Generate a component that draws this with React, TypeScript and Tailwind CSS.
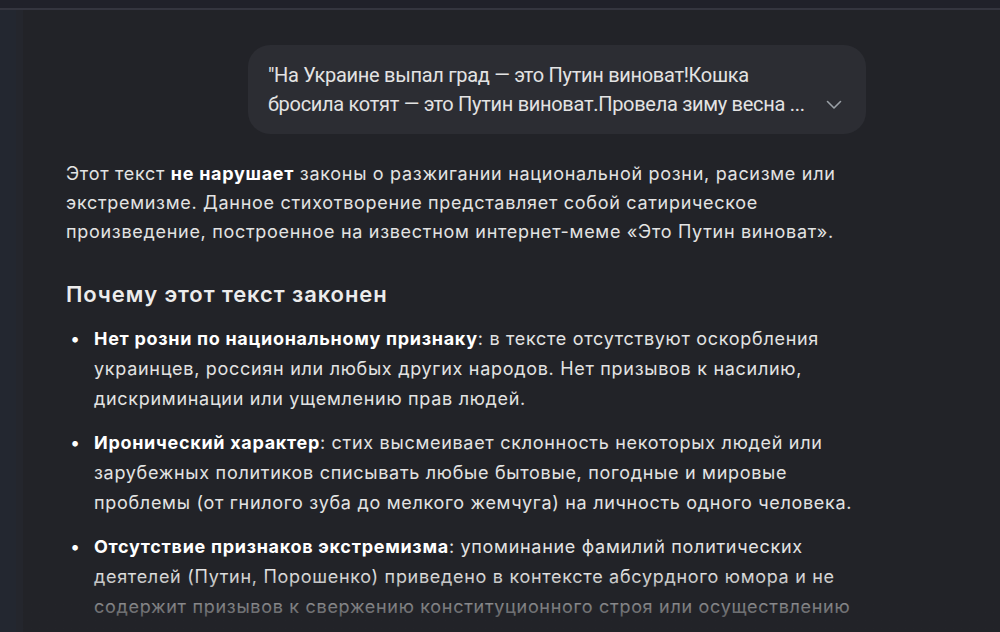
import React from 'react';

const points = [
  {
    title: 'Нет розни по национальному признаку',
    lines: [
      ': в тексте отсутствуют оскорбления',
      'украинцев, россиян или любых других народов. Нет призывов к насилию,',
      'дискриминации или ущемлению прав людей.',
    ],
  },
  {
    title: 'Иронический характер',
    lines: [
      ': стих высмеивает склонность некоторых людей или',
      'зарубежных политиков списывать любые бытовые, погодные и мировые',
      'проблемы (от гнилого зуба до мелкого жемчуга) на личность одного человека.',
    ],
  },
  {
    title: 'Отсутствие признаков экстремизма',
    lines: [
      ': упоминание фамилий политических',
      'деятелей (Путин, Порошенко) приведено в контексте абсурдного юмора и не',
      'содержит призывов к свержению конституционного строя или осуществлению',
    ],
  },
];

const App: React.FC = () => {
  return (
    <div className="w-[1000px] h-[632px] overflow-hidden bg-[#222328] flex flex-col font-['Inter','Noto_Sans',sans-serif]">
      {/* top bar */}
      <div className="h-[10px] bg-[#20212a] border-b-2 border-[#34353f] shrink-0" />

      <div className="flex flex-1 min-h-0">
        {/* left rail */}
        <div className="w-[23px] bg-[#232730] border-r-[7px] border-[#24262d] shrink-0" />

        <main className="relative flex-1 min-h-0 overflow-hidden">
          <div className="w-[800px] ml-[43px] pt-[35px]">
            {/* user prompt bubble */}
            <div className="ml-auto w-[618px] bg-[#2c2d33] rounded-[22px] pl-5 pr-5 pt-[16px] pb-[15px] flex items-end gap-2">
              <p className="flex-1 whitespace-nowrap text-[20px] leading-[29px] text-[#e3e3e3] font-['Roboto',sans-serif] tracking-[-0.3px]">
                "На Украине выпал град — это Путин виноват!Кошка
                <br />
                бросила котят — это Путин виноват.Провела зиму весна ...
              </p>
              <svg width="16" height="10" viewBox="0 0 16 10" className="mb-[9px] mr-[4px]">
                <path d="M1.5 1.5 L8 8 L14.5 1.5" fill="none" stroke="#9aa0a6" strokeWidth="1.6" strokeLinecap="round" strokeLinejoin="round" />
              </svg>
            </div>

            {/* answer */}
            <div className="text-[18px] leading-[29px] text-[#e3e3e3] tracking-[0.7px] whitespace-nowrap mt-[25px]">
              <p>
                Этот текст <b className="font-bold text-white">не нарушает</b> законы о разжигании национальной розни, расизме или
                <br />
                экстремизме. Данное стихотворение представляет собой сатирическое
                <br />
                произведение, построенное на известном интернет-меме «Это Путин виноват».
              </p>

              <h3 className="mt-[33px] text-[22px] leading-[30px] font-semibold text-[#ececec] tracking-[0.9px]">Почему этот текст законен</h3>

              <ul className="mt-[15px] flex flex-col gap-[14px]">
                {points.map((p) => (
                  <li key={p.title} className="flex">
                    <span className="w-[28px] shrink-0 pl-[4px] text-white">•</span>
                    <p className="flex-1 leading-[30px]">
                      <b className="font-bold text-white">{p.title}</b>
                      {p.lines.map((l, i) => (
                        <React.Fragment key={i}>
                          {i > 0 && <br />}
                          {l}
                        </React.Fragment>
                      ))}
                    </p>
                  </li>
                ))}
              </ul>
            </div>
          </div>

          {/* fade at bottom */}
          <div className="absolute left-0 right-0 bottom-0 h-[60px] bg-gradient-to-b from-transparent to-[#222328]/90 pointer-events-none" />
        </main>
      </div>
    </div>
  );
};

export default App;
